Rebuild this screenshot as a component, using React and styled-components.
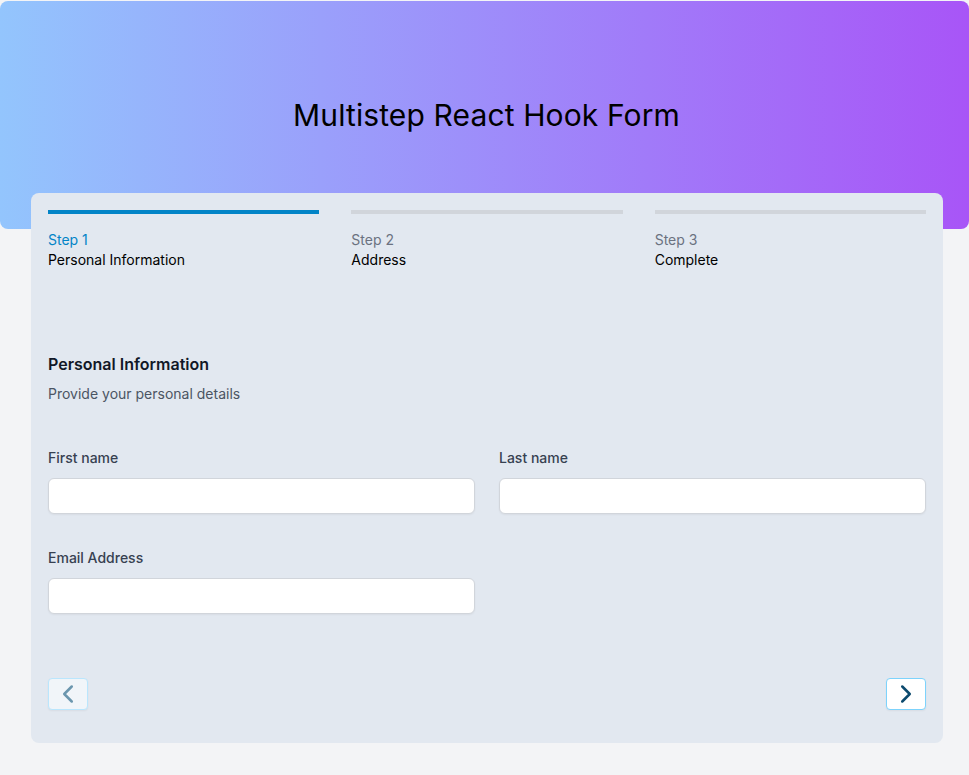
import React from 'react';
import styled, { createGlobalStyle } from 'styled-components';

const GlobalStyle = createGlobalStyle`
  html, body {
    margin: 0;
    padding: 0;
    background: #f3f4f6;
    font-family: Inter, "Noto Sans", sans-serif;
  }
  * { box-sizing: border-box; }
`;

const Page = styled.div`
  min-height: 775px;
  padding-top: 1px;
`;

const Hero = styled.header`
  height: 228px;
  border-radius: 8px;
  background: linear-gradient(to right, #93c5fd, #a855f7);
  display: flex;
  justify-content: center;
  padding-top: 96px;
  padding-left: 4px;
`;

const Title = styled.h1`
  margin: 0;
  font-size: 30px;
  line-height: 36px;
  font-weight: 400;
  letter-spacing: 0.12px;
  color: #000;
`;

const Card = styled.main`
  margin: -36px 26px 0 31px;
  background: #e2e8f0;
  border-radius: 8px;
  padding: 17px 17px 33px;
`;

const Steps = styled.ol`
  list-style: none;
  margin: 0;
  padding: 0;
  display: grid;
  grid-template-columns: repeat(3, 1fr);
  gap: 32px;
`;

const Step = styled.li`
  border-top: 4px solid ${p => (p.$active ? '#0284c7' : '#d1d5db')};
  padding-top: 16px;
  display: flex;
  flex-direction: column;
`;

const StepId = styled.span`
  font-size: 14px;
  line-height: 20px;
  color: ${p => (p.$active ? '#0284c7' : '#6b7280')};
`;

const StepName = styled.span`
  font-size: 14px;
  line-height: 20px;
  color: #000;
`;

const Section = styled.section`
  margin-top: 82px;
`;

const Heading = styled.h2`
  margin: 0;
  font-size: 16px;
  line-height: 24px;
  font-weight: 600;
  color: #111827;
`;

const Sub = styled.p`
  margin: 8px 0 0;
  font-size: 14px;
  line-height: 20px;
  color: #4b5563;
`;

const Fields = styled.div`
  margin-top: 44px;
  display: grid;
  grid-template-columns: 1fr 1fr;
  column-gap: 24px;
  row-gap: 34px;
`;

const Field = styled.div`
  display: flex;
  flex-direction: column;
  gap: 10px;
`;

const Label = styled.label`
  font-size: 14px;
  line-height: 20px;
  font-weight: 500;
  color: #374151;
`;

const Input = styled.input`
  height: 36px;
  border: 1px solid #d1d5db;
  border-radius: 6px;
  background: #fff;
  box-shadow: 0 1px 2px rgba(0, 0, 0, 0.05);
  font: inherit;
  padding: 0 10px;
`;

const Nav = styled.div`
  margin-top: 64px;
  display: flex;
  justify-content: space-between;
`;

const NavButton = styled.button`
  width: 40px;
  height: 32px;
  border-radius: 4px;
  border: 1px solid ${p => (p.disabled ? '#bae6fd' : '#7dd3fc')};
  background: ${p => (p.disabled ? '#f1f5f9' : '#fff')};
  color: ${p => (p.disabled ? '#6b96ae' : '#0c4a6e')};
  display: flex;
  align-items: center;
  justify-content: center;
  padding: 0;
  box-shadow: 0 1px 2px rgba(0, 0, 0, 0.05);
`;

const Chevron = ({ dir }) => (
  <svg width="24" height="24" viewBox="0 0 24 24" fill="none" stroke="currentColor" strokeWidth="2.5">
    <path
      strokeLinecap="round"
      strokeLinejoin="round"
      d={dir === 'left' ? 'M15.75 19.5 8.25 12l7.5-7.5' : 'm8.25 4.5 7.5 7.5-7.5 7.5'}
    />
  </svg>
);

const steps = [
  { id: 'Step 1', name: 'Personal Information' },
  { id: 'Step 2', name: 'Address' },
  { id: 'Step 3', name: 'Complete' },
];

export default function App() {
  return (
    <Page>
      <GlobalStyle />
      <Hero>
        <Title>Multistep React Hook Form</Title>
      </Hero>
      <Card>
        <Steps>
          {steps.map((s, i) => (
            <Step key={s.id} $active={i === 0}>
              <StepId $active={i === 0}>{s.id}</StepId>
              <StepName>{s.name}</StepName>
            </Step>
          ))}
        </Steps>
        <Section>
          <Heading>Personal Information</Heading>
          <Sub>Provide your personal details</Sub>
          <Fields>
            <Field>
              <Label>First name</Label>
              <Input type="text" />
            </Field>
            <Field>
              <Label>Last name</Label>
              <Input type="text" />
            </Field>
            <Field>
              <Label>Email Address</Label>
              <Input type="email" />
            </Field>
          </Fields>
        </Section>
        <Nav>
          <NavButton disabled>
            <Chevron dir="left" />
          </NavButton>
          <NavButton>
            <Chevron dir="right" />
          </NavButton>
        </Nav>
      </Card>
    </Page>
  );
}
